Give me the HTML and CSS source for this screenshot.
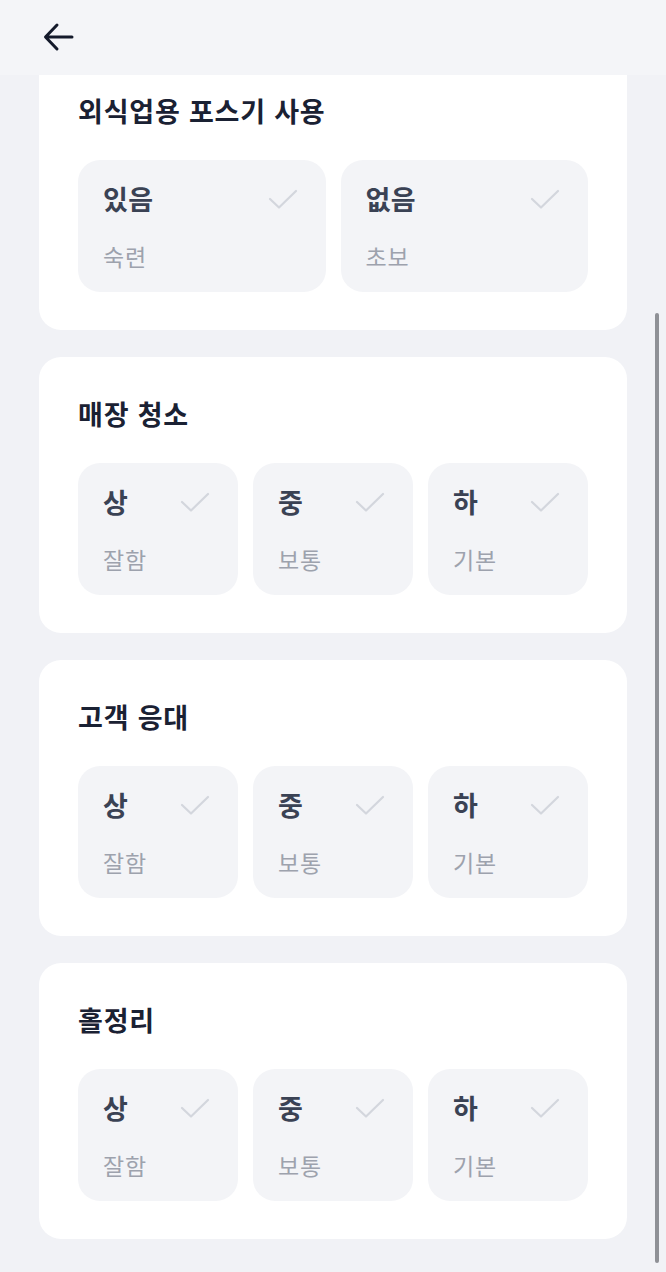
FILE: index.html
```html
<!DOCTYPE html>
<html lang="ko">
<head>
<meta charset="utf-8">
<link rel="stylesheet" href="styles.css">
</head>
<body>
<header class="topbar">
  <button class="back" aria-label="뒤로">
    <svg width="36" height="36" viewBox="0 0 36 36" fill="none" stroke="#141a2b" stroke-width="3" stroke-linecap="round" stroke-linejoin="round"><path d="M31 18H5M16 6L4.5 18 16 30"/></svg>
  </button>
</header>
<main class="scroller">
  <div class="list">
    <section class="card">
      <h2 class="title">외식업용 포스기 사용</h2>
      <div class="opts two">
        <div class="opt"><div class="row"><span class="lab">있음</span><svg class="chk" viewBox="0 0 30 22"><path d="M2 11l9 8.5L28 3"/></svg></div><span class="sub">숙련</span></div>
        <div class="opt"><div class="row"><span class="lab">없음</span><svg class="chk" viewBox="0 0 30 22"><path d="M2 11l9 8.5L28 3"/></svg></div><span class="sub">초보</span></div>
      </div>
    </section>
    <section class="card">
      <h2 class="title">매장 청소</h2>
      <div class="opts three">
        <div class="opt"><div class="row"><span class="lab">상</span><svg class="chk" viewBox="0 0 30 22"><path d="M2 11l9 8.5L28 3"/></svg></div><span class="sub">잘함</span></div>
        <div class="opt"><div class="row"><span class="lab">중</span><svg class="chk" viewBox="0 0 30 22"><path d="M2 11l9 8.5L28 3"/></svg></div><span class="sub">보통</span></div>
        <div class="opt"><div class="row"><span class="lab">하</span><svg class="chk" viewBox="0 0 30 22"><path d="M2 11l9 8.5L28 3"/></svg></div><span class="sub">기본</span></div>
      </div>
    </section>
    <section class="card">
      <h2 class="title">고객 응대</h2>
      <div class="opts three">
        <div class="opt"><div class="row"><span class="lab">상</span><svg class="chk" viewBox="0 0 30 22"><path d="M2 11l9 8.5L28 3"/></svg></div><span class="sub">잘함</span></div>
        <div class="opt"><div class="row"><span class="lab">중</span><svg class="chk" viewBox="0 0 30 22"><path d="M2 11l9 8.5L28 3"/></svg></div><span class="sub">보통</span></div>
        <div class="opt"><div class="row"><span class="lab">하</span><svg class="chk" viewBox="0 0 30 22"><path d="M2 11l9 8.5L28 3"/></svg></div><span class="sub">기본</span></div>
      </div>
    </section>
    <section class="card">
      <h2 class="title">홀정리</h2>
      <div class="opts three">
        <div class="opt"><div class="row"><span class="lab">상</span><svg class="chk" viewBox="0 0 30 22"><path d="M2 11l9 8.5L28 3"/></svg></div><span class="sub">잘함</span></div>
        <div class="opt"><div class="row"><span class="lab">중</span><svg class="chk" viewBox="0 0 30 22"><path d="M2 11l9 8.5L28 3"/></svg></div><span class="sub">보통</span></div>
        <div class="opt"><div class="row"><span class="lab">하</span><svg class="chk" viewBox="0 0 30 22"><path d="M2 11l9 8.5L28 3"/></svg></div><span class="sub">기본</span></div>
      </div>
    </section>
  </div>
  <div class="scrollbar"></div>
</main>
</body>
</html>
```
FILE: styles.css
```css
* { box-sizing: border-box; }
html, body { margin: 0; padding: 0; }
body {
  width: 666px;
  height: 1272px;
  overflow: hidden;
  background: #f1f2f6;
  font-family: "Noto Sans CJK KR", "Noto Sans", sans-serif;
}
.topbar {
  height: 75px;
  background: #f4f5f8;
  display: flex;
  align-items: center;
  padding-left: 41px;
  padding-bottom: 2px;
}
.back {
  border: 0;
  background: none;
  padding: 0;
  width: 36px;
  height: 36px;
  display: flex;
}
.scroller {
  position: relative;
  height: 1197px;
  overflow: hidden;
}
.list {
  display: flex;
  flex-direction: column;
  gap: 27px;
  padding: 0 39px;
  margin-top: -21px;
}
.card {
  background: #fff;
  border-radius: 22px;
  padding: 39px 39px 38px;
  display: flex;
  flex-direction: column;
  gap: 31px;
}
.title {
  margin: 0;
  font-size: 27px;
  line-height: 36px;
  font-weight: 700;
  color: #1a2133;
  letter-spacing: 0.8px;
}
.opts {
  display: grid;
  gap: 15px;
}
.opts.two { grid-template-columns: 1fr 1fr; }
.opts.three { grid-template-columns: 1fr 1fr 1fr; }
.opt {
  background: #f3f4f7;
  border-radius: 22px;
  height: 132px;
  padding: 23px 28px 0 25px;
  display: flex;
  flex-direction: column;
  gap: 26px;
}
.row {
  display: flex;
  justify-content: space-between;
  align-items: center;
  height: 32px;
}
.lab {
  font-size: 27px;
  line-height: 32px;
  font-weight: 700;
  color: #3a4254;
  letter-spacing: 0.5px;
}
.chk {
  width: 30px;
  height: 22px;
  fill: none;
  stroke: #d3d6dd;
  stroke-width: 2.2;
  stroke-linecap: round;
  stroke-linejoin: round;
}
.sub {
  font-size: 23px;
  line-height: 30px;
  color: #9da2ad;
  letter-spacing: 0.8px;
}
.scrollbar {
  position: absolute;
  left: 655px;
  top: 238px;
  width: 4px;
  height: 950px;
  border-radius: 2px;
  background: #8f9196;
}
```
